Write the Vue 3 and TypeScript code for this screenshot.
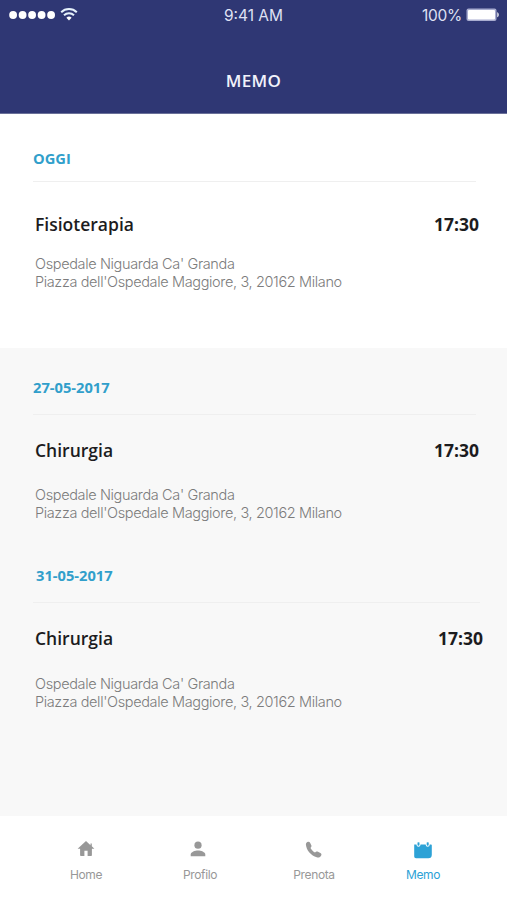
<script setup lang="ts">
interface Memo {
  id: string
  label: string
  title: string
  time: string
  place: string
  address: string
}

interface Tab {
  id: 'home' | 'profile' | 'book' | 'agenda'
  label: string
}

const place = "Ospedale Niguarda Ca' Granda"
const address = "Piazza dell'Ospedale Maggiore, 3, 20162 Milano"

const today: Memo[] = [
  { id: 'today', label: 'OGGI', title: 'Fisioterapia', time: '17:30', place, address },
]

const upcoming: Memo[] = [
  { id: 'next', label: '27-05-2017', title: 'Chirurgia', time: '17:30', place, address },
  { id: 'later', label: '31-05-2017', title: 'Chirurgia', time: '17:30', place, address },
]

const groups = [
  { id: 'current', memos: today },
  { id: 'upcoming', memos: upcoming },
]

const tabs: Tab[] = [
  { id: 'home', label: 'Home' },
  { id: 'profile', label: 'Profilo' },
  { id: 'book', label: 'Prenota' },
  { id: 'agenda', label: 'Memo' },
]

const activeTab = 'agenda'
</script>

<template>
  <div class="screen">
    <header class="header">
      <div class="status">
        <div class="signal">
          <svg class="dots" width="47" height="10" viewBox="0 0 47 10">
            <circle v-for="n in 5" :key="n" :cx="n * 9.5 - 5.4" cy="5" r="3.9" fill="#fff" />
          </svg>
          <svg class="wifi" width="18" height="14" viewBox="0 0 18 14">
            <g fill="none" stroke="#e6f2fb" stroke-width="2">
              <path d="M1.2 4.2a11.2 11.2 0 0 1 15.6 0" />
              <path d="M4 7.2a7.2 7.2 0 0 1 10 0" />
            </g>
            <path d="M9 12.6 6.4 9.8a3.8 3.8 0 0 1 5.2 0z" fill="#fff" />
          </svg>
        </div>
        <span class="clock">9:41 AM</span>
        <div class="power">
          <span class="charge">100%</span>
          <svg width="34" height="14" viewBox="0 0 34 14">
            <rect x=".5" y=".5" width="30" height="12.6" rx="2" fill="#a9add0" />
            <rect x="2" y="2" width="27" height="9.6" rx="1" fill="#fff" />
            <path d="M31.3 4.3c1.9.6 1.9 4.4 0 5z" fill="#fff" />
          </svg>
        </div>
      </div>
      <h1 class="heading">MEMO</h1>
    </header>

    <main class="content">
      <section v-for="group in groups" :key="group.id" class="group" :class="group.id">
        <article v-for="memo in group.memos" :key="memo.id" class="memo" :class="memo.id">
          <h2 class="label">{{ memo.label }}</h2>
          <div class="summary">
            <h3 class="title">{{ memo.title }}</h3>
            <time class="time">{{ memo.time }}</time>
          </div>
          <p class="address">{{ memo.place }}<br />{{ memo.address }}</p>
        </article>
      </section>
    </main>

    <nav class="tabs">
      <a v-for="tab in tabs" :key="tab.id" class="tab" :class="[tab.id, { active: tab.id === activeTab }]">
        <svg class="icon" width="22" height="22" viewBox="0 0 22 22" fill="currentColor">
          <path v-if="tab.id === 'home'" d="M11 2.9 2.6 10.8h2.5v6.5q0 .8.8.8h3.5v-5.3h3.2v5.3h3.5q.8 0 .8-.8v-6.5h2.500l-2.600-2.450V5.500h-1.300v1.650z" />
          <template v-else-if="tab.id === 'profile'">
            <circle cx="11" cy="7.2" r="3.6" />
            <path d="M3.7 18.2v-1.8c0-2.5 4.4-4 7.3-4s7.3 1.5 7.3 4v1.8z" />
          </template>
          <path v-else-if="tab.id === 'book'" d="M2.9 6.6C2.8 5 3.900 4 5.100 3.800c1-.1 1.700.3 2.100 1.100l1.100 2.300c.4.800.2 1.400-.3 2l-.5.700c.9 1.800 2.600 3.600 4.500 4.500l1-.6c.7-.5 1.300-.5 2-.1l2.400 1.300c1 .5 1.300 1.300.9 2.200-.8 1.900-2.600 2.700-4.600 2.100C8.300 17.900 3.200 12.300 2.900 6.600z" />
          <path v-else d="M2.2 6.4h2.300v.4a2 2 0 0 0 4 0v-.4h5.200v.4a2 2 0 0 0 4 0v-.4H19q.8 0 .8.8v9.600q0 3.500-3.500 3.500H4q-1.800 0-1.800-1.800zM5.500 4.600q1-.8 2 0v2.200a1 1 0 0 1-2 0zM14.700 4.600q1-.8 2 0v2.200a1 1 0 0 1-2 0z" />
        </svg>
        <span class="caption">{{ tab.label }}</span>
      </a>
    </nav>
  </div>
</template>

<style>
body {
  margin: 0;
}
</style>

<style scoped>
.screen {
  width: 507px;
  height: 900px;
  display: flex;
  flex-direction: column;
  background: #fff;
  font-family: 'Open Sans', sans-serif;
  overflow: hidden;
}

h1,
h2,
h3,
p {
  margin: 0;
}

.header {
  box-sizing: border-box;
  height: 114px;
  background: #2f3774;
  border-bottom: 1px solid #6a7099;
  color: #f1f2fb;
}

.status {
  height: 30px;
  display: grid;
  grid-template-columns: 1fr auto 1fr;
  align-items: center;
  padding: 0 7px 0 9px;
  font: 400 15.5px/30px Inter, sans-serif;
  color: #dfe1f3;
}

.signal,
.power {
  display: flex;
  align-items: center;
}

.signal {
  gap: 4px;
}

.power {
  justify-content: flex-end;
  gap: 4px;
  letter-spacing: -0.3px;
}

.charge {
  padding-top: 1px;
  line-height: 29px;
}

.clock {
  padding: 1px 2px 0 0;
  line-height: 29px;
}

.heading {
  padding-top: 39px;
  font-size: 17px;
  font-weight: 600;
  line-height: 24px;
  letter-spacing: 0.3px;
  text-align: center;
}

.group {
  box-sizing: border-box;
}

.current {
  height: 234px;
  padding-top: 34px;
}

.upcoming {
  height: 468px;
  padding-top: 29px;
  background: #f8f8f8;
}

.memo {
  padding: 0 28px 0 33px;
}

.label {
  height: 33px;
  border-bottom: 1px solid #efefef;
  margin-right: 3px;
  color: #319fcb;
  font-size: 14.7px;
  font-weight: 700;
  line-height: 21px;
}

.summary {
  display: flex;
  justify-content: space-between;
  padding: 30px 0 0 2px;
  color: #1c1c1e;
  font-size: 17.5px;
  line-height: 24px;
}

.title {
  font-size: inherit;
  font-weight: 600;
}

.time {
  font-weight: 700;
}

.address {
  padding: 19px 0 0 2px;
  color: #7c7c7c;
  font: 300 14.5px/17.5px Inter, sans-serif;
  letter-spacing: -0.36px;
}

.next .label,
.later .label {
  height: 37px;
}

.next .summary,
.later .summary {
  padding-top: 23px;
}

.next .address {
  padding-top: 24px;
}

.later {
  padding: 44px 24px 0 33px;
}

.later .label {
  padding-left: 3px;
}

.later .address {
  padding-top: 25px;
}

.tabs {
  height: 84px;
  display: grid;
  grid-template-columns: 114px 114px 114px 104px;
  padding-left: 29px;
  background: #fff;
}

.tab {
  display: flex;
  flex-direction: column;
  align-items: center;
  padding-top: 22px;
  color: #989898;
}

.profile .icon {
  margin-right: 4px;
}

.tab.active {
  color: #2da2d6;
}

.caption {
  font: 400 12px/16px Inter, sans-serif;
  letter-spacing: -0.35px;
  margin-top: 7px;
}
</style>
